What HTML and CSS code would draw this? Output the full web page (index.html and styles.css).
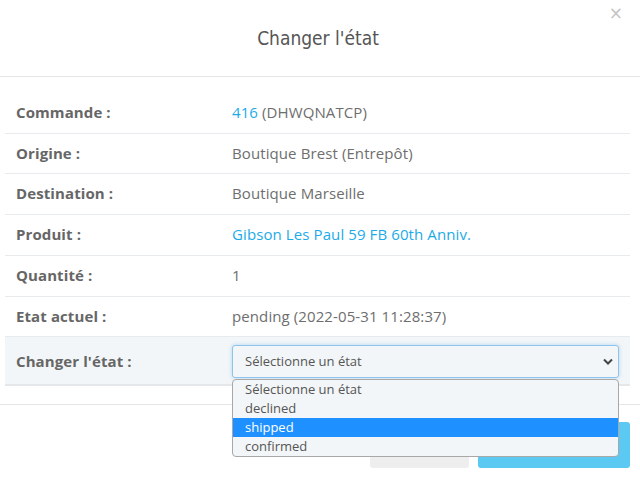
FILE: index.html
```html
<!DOCTYPE html>
<html lang="fr">
<head>
<meta charset="utf-8">
<title>Changer l'état</title>
<link rel="stylesheet" href="styles.css">
</head>
<body>
<div class="modal">
  <div class="modal-header">
    <h4 class="modal-title">Changer l'état</h4>
    <button class="close" type="button" aria-label="Fermer">×</button>
  </div>
  <div class="modal-body">
    <table class="info">
      <tbody>
        <tr><th>Commande :</th><td><a href="#" class="link">416</a> (DHWQNATCP)</td></tr>
        <tr><th>Origine :</th><td>Boutique Brest (Entrepôt)</td></tr>
        <tr><th>Destination :</th><td>Boutique Marseille</td></tr>
        <tr><th>Produit :</th><td><a href="#" class="link">Gibson Les Paul 59 FB 60th Anniv.</a></td></tr>
        <tr><th>Quantité :</th><td>1</td></tr>
        <tr><th>Etat actuel :</th><td>pending (2022-05-31 11:28:37)</td></tr>
        <tr class="active-row"><th>Changer l'état :</th>
          <td>
            <div class="select-wrap">
              <div class="select">Sélectionne un état</div>
              <svg class="chevron" width="10" height="7" viewBox="0 0 10 7"><path d="M1 1.5 L5 5.5 L9 1.5" fill="none" stroke="#444" stroke-width="2"/></svg>
              <ul class="options">
                <li>Sélectionne un état</li>
                <li>declined</li>
                <li class="selected">shipped</li>
                <li>confirmed</li>
              </ul>
            </div>
          </td>
        </tr>
      </tbody>
    </table>
  </div>
  <div class="modal-footer">
    <button class="btn btn-default" type="button">Annuler</button>
    <button class="btn btn-primary" type="button">Enregistrer</button>
  </div>
</div>
</body>
</html>
```
FILE: styles.css
```css
html, body {
  margin: 0;
  padding: 0;
  background: #fff;
}
body {
  font-family: "Open Sans", "Liberation Sans", sans-serif;
  font-size: 15px;
  letter-spacing: 0.1px;
  color: #6e6e6e;
}
.modal {
  width: 640px;
}
.modal-header {
  position: relative;
  height: 76px;
  border-bottom: 1px solid #e6e6e6;
  display: flex;
  align-items: center;
  justify-content: center;
}
.modal-title {
  margin: 0;
  font-family: "DejaVu Sans Condensed", "DejaVu Sans", sans-serif;
  font-stretch: condensed;
  font-weight: normal;
  font-size: 19px;
  letter-spacing: 0;
  color: #555;
  padding-right: 4px;
}
.close {
  position: absolute;
  top: 3px;
  right: 17px;
  border: 0;
  background: none;
  padding: 0;
  font-family: "DejaVu Sans", sans-serif;
  font-size: 17px;
  color: #c4c4c4;
  line-height: 20px;
  cursor: pointer;
}
.modal-body {
  padding: 16px 10px 18px 5px;
}
.info {
  width: 100%;
  border-collapse: collapse;
}
.info th, .info td {
  padding: 10px 11px;
  line-height: 19.7px;
  text-align: left;
  vertical-align: middle;
  border-bottom: 1px solid #e8ebee;
}
.info th {
  width: 194px;
  font-weight: 700;
  color: #666;
}
.info tr:nth-child(6) th, .info tr:nth-child(6) td {
  border-bottom: 0;
}
.active-row th, .active-row td {
  background: #f3f6f8;
  border-top: 1px solid #e8ebee;
  border-bottom: 2px solid #e4e8eb;
  padding-top: 8px;
  padding-bottom: 6px;
}
.link {
  color: #1cabe8;
  text-decoration: none;
}
.select-wrap {
  position: relative;
}
.select {
  height: 31px;
  line-height: 31px;
  border: 1px solid #8ec3ec;
  border-radius: 3px;
  box-shadow: 0 0 4px rgba(102, 175, 233, 0.45);
  background: #f3f6f8;
  padding: 0 12px;
  font-size: 13px;
  letter-spacing: 0;
  color: #555;
}
.chevron {
  position: absolute;
  right: 6px;
  top: 13px;
}
.options {
  position: absolute;
  z-index: 5;
  left: 0;
  top: 34px;
  width: 385px;
  margin: 0;
  padding: 0;
  list-style: none;
  background: #f3f6f8;
  border: 1px solid #a8a8a8;
  border-radius: 4px;
  overflow: hidden;
  font-size: 13px;
  letter-spacing: 0;
  color: #555;
}
.options li {
  height: 19px;
  line-height: 19px;
  padding: 0 12px;
}
.options li.selected {
  background: #1e90ff;
  color: #fff;
}
.modal-footer {
  border-top: 1px solid #e6e6e6;
  padding: 17px 10px 12px 0;
  display: flex;
  justify-content: flex-end;
  gap: 9px;
}
.btn {
  height: 46px;
  border: 0;
  border-radius: 3px;
  font-family: "Open Sans", sans-serif;
  font-size: 14px;
  padding: 0 20px;
}
.btn-default {
  width: 99px;
  background: #eeeeee;
  color: #555;
}
.btn-primary {
  width: 152px;
  background: #5bc9f2;
  color: #fff;
}
```
